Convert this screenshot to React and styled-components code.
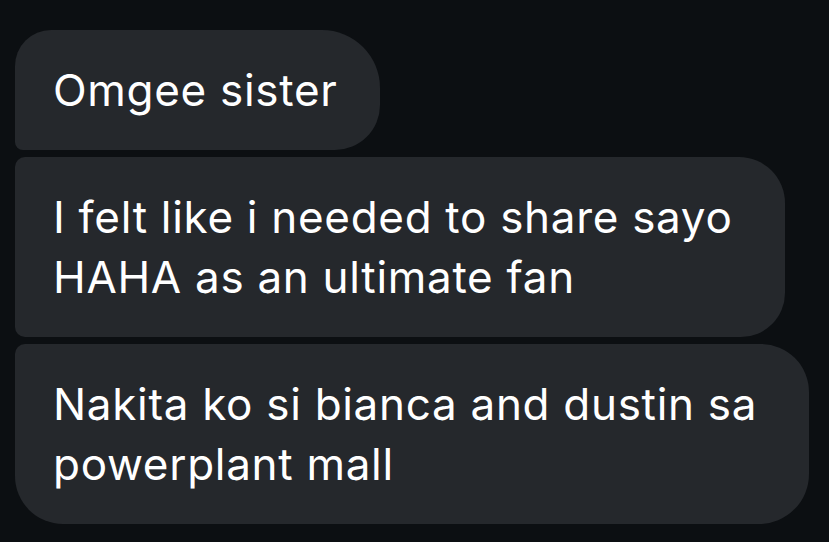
import React from "react";
import styled, { createGlobalStyle } from "styled-components";

const GlobalStyle = createGlobalStyle`
  html, body {
    margin: 0;
    padding: 0;
    background: #0c0f12;
  }
`;

const Thread = styled.div`
  width: 829px;
  height: 542px;
  box-sizing: border-box;
  padding: 30px 0 0 15px;
  display: flex;
  flex-direction: column;
  align-items: flex-start;
  gap: 7px;
  overflow: hidden;
  background: #0c0f12;
  font-family: Inter, "Noto Sans", sans-serif;
`;

// wrapped bubbles keep some slack on the right, like the chat app does
const Bubble = styled.div`
  box-sizing: border-box;
  width: fit-content;
  padding: 30px ${(p) => (p.$wrapped ? "52px" : "42px")} 30px 38px;
  background: #25282c;
  color: #ffffff;
  font-size: 44px;
  line-height: 60px;
  letter-spacing: 0.7px;
  white-space: nowrap;
  border-radius: ${(p) => p.$radius};
`;

const messages = [
  { id: 1, lines: ["Omgee sister"], radius: "36px 58px 45px 8px" },
  {
    id: 2,
    lines: ["I felt like i needed to share sayo", "HAHA as an ultimate fan"],
    radius: "10px 46px 44px 10px",
  },
  {
    id: 3,
    lines: ["Nakita ko si bianca and dustin sa", "powerplant mall"],
    radius: "10px 48px 50px 48px",
  },
];

const App = () => {
  return (
    <>
      <GlobalStyle />
      <Thread>
        {messages.map((m) => (
          <Bubble key={m.id} $radius={m.radius} $wrapped={m.lines.length > 1}>
            {m.lines.map((line, i) => (
              <React.Fragment key={i}>
                {i > 0 && <br />}
                {line}
              </React.Fragment>
            ))}
          </Bubble>
        ))}
      </Thread>
    </>
  );
};

export default App;
